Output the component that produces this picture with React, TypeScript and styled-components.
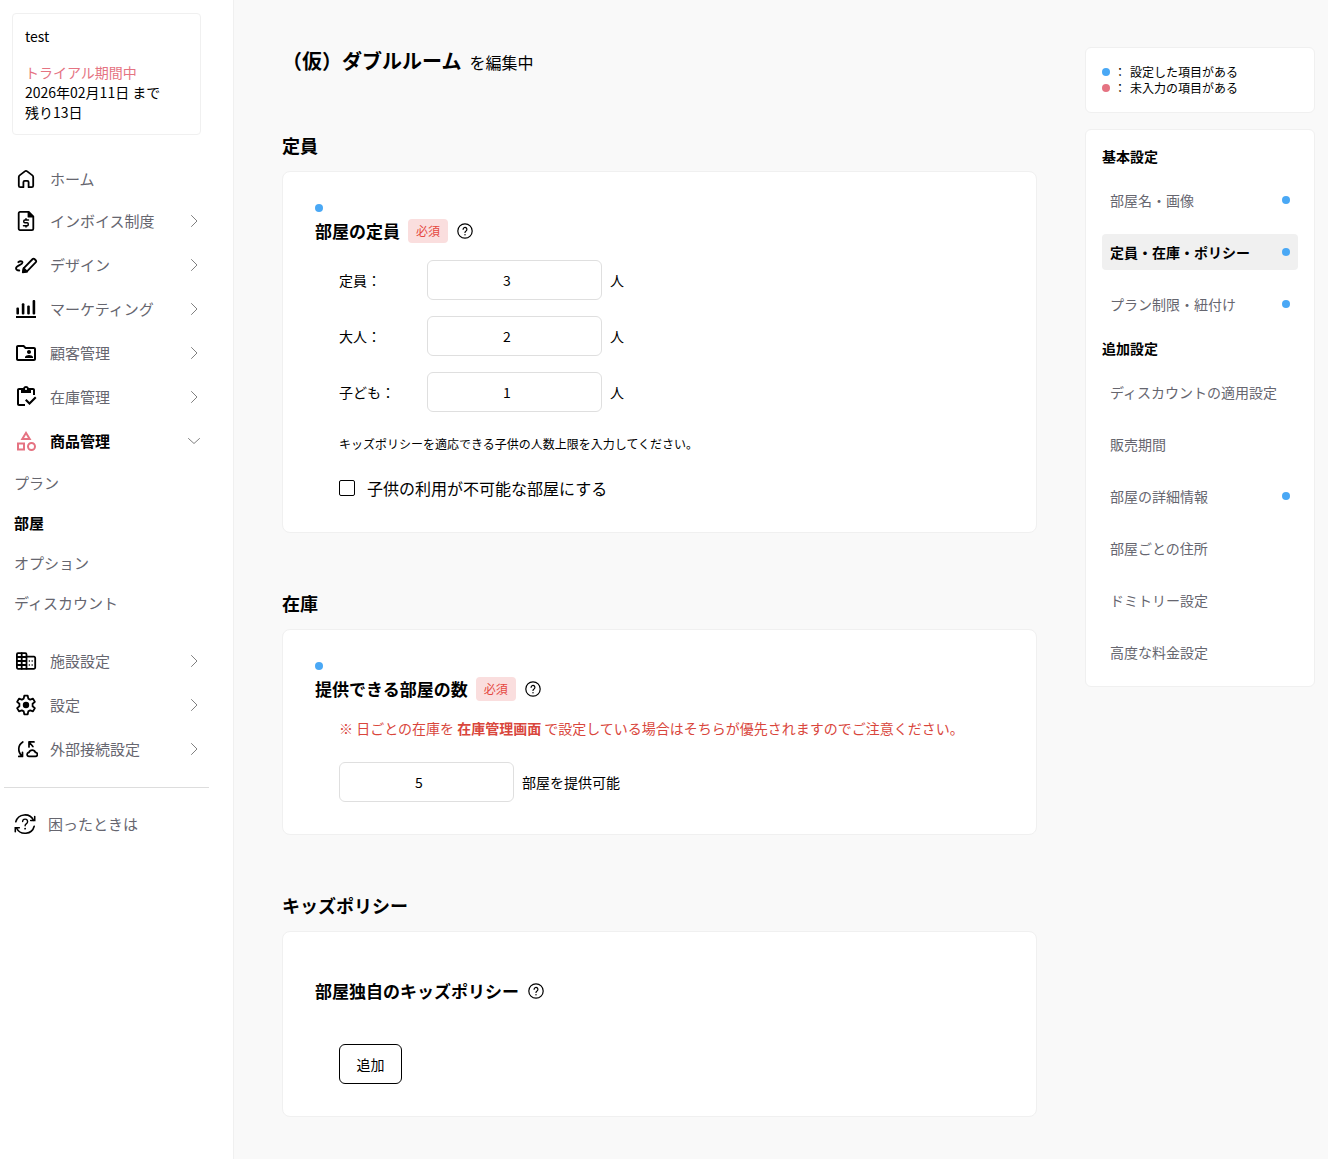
import React, { useState } from "react";
import styled, { createGlobalStyle, css } from "styled-components";
import {
  MdOutlineCategory,
  MdOutlineFolderShared,
  MdOutlineInventory,
} from "react-icons/md";

const color = {
  text: "#000000",
  muted: "#66666f",
  page: "#f9f9f9",
  surface: "#ffffff",
  line: "#f0f0f0",
  inputLine: "#dfdfdf",
  blue: "#4aa8f5",
  pink: "#e57382",
  danger: "#d9463c",
};

const GlobalStyle = createGlobalStyle`
  *, *::before, *::after { box-sizing: border-box; }
  body {
    margin: 0;
    background: ${color.page};
    color: ${color.text};
    font-family: "Noto Sans CJK JP", "Noto Sans", sans-serif;
    font-size: 14px;
    line-height: 20px;
  }
  a { color: inherit; text-decoration: none; }
  button, input { font: inherit; color: inherit; }
  h1, h2, h3, p, ul { margin: 0; padding: 0; }
  ul { list-style: none; }
`;

/* ---------- shell ---------- */

const Shell = styled.div`
  display: flex;
  min-height: 100vh;
`;

const Sidebar = styled.aside`
  flex: 0 0 234px;
  background: ${color.surface};
  border-right: 1px solid ${color.line};
  padding: 13px 24px 24px 4px;
`;

const Main = styled.main`
  flex: 1;
  min-width: 0;
  padding: 46px 48px 42px;
`;

const Side = styled.aside`
  flex: 0 0 230px;
  display: flex;
  flex-direction: column;
  gap: 16px;
  margin: 47px 13px 0 0;
`;

/* ---------- sidebar ---------- */

const Account = styled.section`
  margin: 0 8px 24px;
  padding: 12px;
  border: 1px solid ${color.line};
  border-radius: 4px;
`;

const AccountName = styled.p`
  margin-bottom: 16px;
`;

const Trial = styled.p`
  color: ${color.pink};
`;

const MenuLink = styled.a<{ $active?: boolean; $short?: boolean }>`
  display: flex;
  align-items: center;
  gap: 12px;
  height: ${(p) => (p.$short ? 40 : 44)}px;
  padding: 0 8px 0 10px;
  font-size: 15px;
  color: ${(p) => (p.$active ? color.text : color.muted)};
  font-weight: ${(p) => (p.$active ? 700 : 400)};
`;

const MenuIcon = styled.span<{ $accent?: boolean }>`
  display: flex;
  color: ${(p) => (p.$accent ? color.pink : color.text)};
  svg {
    width: 24px;
    height: 24px;
  }
`;

const MenuText = styled.span`
  flex: 1;
`;

const Chevron = styled.span`
  display: flex;
  color: #808080;
  svg {
    width: 14px;
    height: 14px;
  }
`;

const SubMenu = styled.ul`
  padding-bottom: 16px;
`;

const SubLink = styled.a<{ $active?: boolean }>`
  display: flex;
  align-items: center;
  height: 40px;
  padding-left: 10px;
  font-size: 15px;
  color: ${(p) => (p.$active ? color.text : color.muted)};
  font-weight: ${(p) => (p.$active ? 700 : 400)};
`;

const HelpArea = styled.div`
  margin-top: 16px;
  padding-top: 14px;
  border-top: 1px solid #dddddd;
`;

const HelpLink = styled(MenuLink)`
  gap: 11px;
  padding-left: 9px;
`;

/* ---------- shared pieces ---------- */

const cardBox = css`
  background: ${color.surface};
  border: 1px solid ${color.line};
`;

const Dot = styled.span<{ $tone?: "blue" | "pink" }>`
  flex: none;
  display: block;
  width: 8px;
  height: 8px;
  border-radius: 50%;
  background: ${(p) => (p.$tone === "pink" ? color.pink : color.blue)};
`;

/* ---------- main column ---------- */

const PageTitle = styled.h1`
  display: flex;
  align-items: baseline;
  gap: 8px;
  margin-bottom: 55px;
  font-size: 20px;
  line-height: 30px;
`;

const TitleNote = styled.span`
  font-size: 16px;
  font-weight: 400;
`;

const Section = styled.section`
  & + & {
    margin-top: 57px;
  }
`;

const SectionTitle = styled.h2`
  margin-bottom: 13px;
  font-size: 18px;
  line-height: 26px;
`;

const Card = styled.div`
  ${cardBox}
  border-radius: 8px;
  padding: 32px;
`;

const DotRow = styled.div`
  height: 15px;
`;

const FieldHead = styled.div`
  display: flex;
  align-items: center;
  gap: 8px;
  margin-bottom: 17px;
`;

const FieldTitle = styled.h3`
  font-size: 17px;
  line-height: 24px;
`;

const Required = styled.span`
  padding: 0 8px;
  border-radius: 4px;
  background: #fadede;
  color: #e5483f;
  font-size: 12px;
  line-height: 24px;
`;

const HintButton = styled.button`
  display: flex;
  align-items: center;
  justify-content: center;
  width: 18px;
  height: 18px;
  padding: 0;
  border: 0;
  background: none;
  cursor: pointer;
  svg {
    width: 16px;
    height: 16px;
  }
`;

const FieldBody = styled.div`
  display: flex;
  flex-direction: column;
  align-items: flex-start;
  gap: 24px;
  padding-left: 24px;
`;

const CountRows = styled.div`
  display: flex;
  flex-direction: column;
  gap: 16px;
`;

const CountRow = styled.div`
  display: flex;
  align-items: center;
  gap: 8px;
`;

const CountLabel = styled.label`
  width: 80px;
`;

const NumberInput = styled.input`
  width: 175px;
  height: 40px;
  padding: 0 8px;
  border: 1px solid ${color.inputLine};
  border-radius: 6px;
  background: ${color.surface};
  text-align: center;
`;

const SmallNote = styled.p`
  font-size: 12px;
  line-height: 16px;
`;

const CheckLabel = styled.label`
  display: flex;
  align-items: center;
  gap: 12px;
  font-size: 16px;
  line-height: 24px;
`;

const CheckBox = styled.input`
  appearance: none;
  width: 16px;
  height: 16px;
  margin: 0;
  border: 1px solid ${color.text};
  border-radius: 2px;
  background: ${color.surface};
  &:checked {
    background: ${color.text};
    box-shadow: inset 0 0 0 2px ${color.surface};
  }
`;

const Warning = styled.p`
  color: ${color.danger};
`;

const StrongLink = styled.a`
  font-weight: 700;
`;

const AddButton = styled.button`
  min-width: 63px;
  height: 40px;
  margin-top: 24px;
  padding: 0 16px;
  border: 1px solid ${color.text};
  border-radius: 6px;
  background: ${color.surface};
  cursor: pointer;
`;

/* ---------- right column ---------- */

const Legend = styled.ul`
  ${cardBox}
  border-radius: 6px;
  padding: 16px;
`;

const LegendRow = styled.li`
  display: flex;
  align-items: center;
  gap: 4px;
  font-size: 12px;
  line-height: 16px;
`;

const SettingNav = styled.nav`
  ${cardBox}
  border-radius: 6px;
  padding: 16px;
  display: flex;
  flex-direction: column;
  gap: 16px;
`;

const NavTitle = styled.h2`
  font-size: 14px;
  line-height: 20px;
`;

const NavLink = styled.a<{ $active?: boolean }>`
  display: flex;
  align-items: center;
  justify-content: space-between;
  height: 36px;
  padding: 0 8px;
  border-radius: 4px;
  color: ${(p) => (p.$active ? color.text : color.muted)};
  font-weight: ${(p) => (p.$active ? 700 : 400)};
  background: ${(p) => (p.$active ? "#f0f0f0" : "transparent")};
`;

/* ---------- icons ---------- */

const Line = ({
  children,
  width = 1.8,
  box = 24,
}: {
  children: React.ReactNode;
  width?: number;
  box?: number;
}) => (
  <svg
    viewBox={`0 0 ${box} ${box}`}
    fill="none"
    stroke="currentColor"
    strokeWidth={width}
    strokeLinecap="round"
    strokeLinejoin="round"
    aria-hidden="true"
  >
    {children}
  </svg>
);

const ChevronRight = () => (
  <Line box={14} width={1}>
    <path d="M4.500 1.500L10 7l-5.500 5.500" />
  </Line>
);

const ChevronDown = () => (
  <Line box={14} width={1}>
    <path d="M1.500 4.500L7 9.500l5.500-5" />
  </Line>
);

const HintIcon = () => (
  <Line box={16} width={1.2}>
    <circle cx="8" cy="8" r="7.200" />
    <path d="M6.100 6.300a1.900 1.900 0 1 1 2.900 1.600c-.7.4-1 .8-1 1.500" />
    <path d="M8 11.600v.1" strokeWidth="1.4" />
  </Line>
);

const HomeIcon = () => (
  <Line>
    <path d="M4.800 10v8.700a1.500 1.500 0 0 0 1.500 1.500h3.100v-5a1.300 1.300 0 0 1 1.300-1.300h2.600a1.300 1.300 0 0 1 1.300 1.300v5h3.100a1.500 1.500 0 0 0 1.500-1.500V10a2 2 0 0 0-.8-1.600l-5.200-4a2 2 0 0 0-2.400 0l-5.200 4A2 2 0 0 0 4.800 10z" />
  </Line>
);

const InvoiceIcon = () => (
  <Line>
    <path d="M14.500 2.900H6a1.300 1.300 0 0 0-1.300 1.300v15.600A1.300 1.300 0 0 0 6 21.100h12a1.300 1.300 0 0 0 1.300-1.300V7.700z" />
    <path d="M14.500 3v4.700h4.700z" fill="currentColor" />
    <path
      d="M14.500 11h-3.700a1 1 0 0 0-1 1v.8a1 1 0 0 0 1 1h2.400a1 1 0 0 1 1 1v.9a1 1 0 0 1-1 1H9.500M12 9.800V11M12 16.700v1.400"
      strokeWidth="1.500"
    />
  </Line>
);

const DesignIcon = () => (
  <Line>
    <path d="M4.300 9.200c1.200-1.100 4.200-1.500 4.200.3 0 2.300-6.500 3-6.500 5.800 0 1.500 1.500 2.200 3.300 2.200" />
    <path d="M9 19.200l.8-4L18.700 6a1.200 1.200 0 0 1 1.700 0l1.500 1.500a1.200 1.200 0 0 1 0 1.700L13 18.300z" />
    <path d="M8.800 19.400l.8-4.200 3.500 3.400z" fill="currentColor" />
  </Line>
);

const ChartIcon = () => (
  <svg viewBox="0 0 24 24" fill="currentColor" aria-hidden="true">
    <rect x="2.400" y="10.500" width="2.600" height="7" rx="1" />
    <rect x="7.800" y="6.200" width="2.600" height="11.300" rx="1" />
    <rect x="13.200" y="8.500" width="2.600" height="9" rx="1" />
    <rect x="18.600" y="3" width="2.600" height="14.500" rx="1" />
    <rect x="2" y="19" width="20" height="2" />
  </svg>
);

const BuildingIcon = () => (
  <Line>
    <path d="M12.500 7.700H20a1.200 1.200 0 0 1 1.200 1.200v9.700a1.200 1.200 0 0 1-1.200 1.200H4A1.200 1.200 0 0 1 2.900 18.600V5.400A1.200 1.200 0 0 1 4 4.200h7.300a1.200 1.200 0 0 1 1.200 1.200z" />
    <path d="M7.700 4.200v15.600M12.500 7.700v12M2.900 8h9.600M2.900 12h9.600M2.900 16h9.600" />
    <path d="M15.300 12h.1M15.300 16h.1M18.100 12h.1M18.100 16h.1" strokeWidth="1.500" />
  </Line>
);

const GearIcon = () => (
  <Line>
    <path d="M10.300 2.700h3.400l.6 2.900 1.900 1.100 2.800-1 1.900 3.200-2.300 1.900v2.400l2.300 1.900-1.900 3.200-2.800-1-1.900 1.100-.6 2.900h-3.400l-.6-2.900-1.900-1.100-2.800 1-1.900-3.200 2.300-1.900v-2.400L3.100 8.900 5 5.700l2.800 1 1.900-1.100z" />
    <circle cx="12" cy="12" r="2.300" fill="currentColor" />
  </Line>
);

const CloudSyncIcon = () => (
  <Line width={1.7}>
    <path d="M8.800 4.900C3.700 8 3.500 14.800 7.900 18.800M4.800 19.400h3.700v-4" />
    <path d="M20 4.900h-5v5M15.200 5.200l3.700 4.300" />
    <path d="M15.200 19.400a2 2 0 0 1-.2-4 3.400 3.400 0 0 1 6.400 0 2 2 0 0 1-.1 4z" />
  </Line>
);

const SupportIcon = () => (
  <Line width={1.6}>
    <path d="M2.800 9.800A9.500 9.500 0 0 1 20.500 8.300M21.200 14.200A9.500 9.500 0 0 1 3.500 16" />
    <path d="M21.700 4.500v4h-4M2.300 19.700v-3.900h4" strokeLinejoin="miter" />
    <path d="M9.600 9.500a2.500 2.500 0 1 1 3.900 2.200c-.9.600-1.400 1-1.400 2" strokeWidth="1.400" />
    <path d="M12.100 16.600v.1" strokeWidth="1.800" />
  </Line>
);

/* ---------- data ---------- */

type MenuEntry = {
  label: string;
  icon: React.ReactNode;
  plain?: boolean;
  active?: boolean;
  children?: { label: string; active?: boolean }[];
};

const menu: MenuEntry[] = [
  { label: "ホーム", icon: <HomeIcon />, plain: true },
  { label: "インボイス制度", icon: <InvoiceIcon /> },
  { label: "デザイン", icon: <DesignIcon /> },
  { label: "マーケティング", icon: <ChartIcon /> },
  { label: "顧客管理", icon: <MdOutlineFolderShared /> },
  { label: "在庫管理", icon: <MdOutlineInventory /> },
  {
    label: "商品管理",
    icon: <MdOutlineCategory />,
    active: true,
    children: [
      { label: "プラン" },
      { label: "部屋", active: true },
      { label: "オプション" },
      { label: "ディスカウント" },
    ],
  },
  { label: "施設設定", icon: <BuildingIcon /> },
  { label: "設定", icon: <GearIcon /> },
  { label: "外部接続設定", icon: <CloudSyncIcon /> },
];

const settingGroups: {
  title: string;
  items: { label: string; dot?: boolean; active?: boolean }[];
}[] = [
  {
    title: "基本設定",
    items: [
      { label: "部屋名・画像", dot: true },
      { label: "定員・在庫・ポリシー", dot: true, active: true },
      { label: "プラン制限・紐付け", dot: true },
    ],
  },
  {
    title: "追加設定",
    items: [
      { label: "ディスカウントの適用設定" },
      { label: "販売期間" },
      { label: "部屋の詳細情報", dot: true },
      { label: "部屋ごとの住所" },
      { label: "ドミトリー設定" },
      { label: "高度な料金設定" },
    ],
  },
];

const counts = [
  { id: "capacity", label: "定員：", value: 3 },
  { id: "adults", label: "大人：", value: 2 },
  { id: "children", label: "子ども：", value: 1 },
];

/* ---------- components ---------- */

function FieldHeading({
  title,
  filled,
  required,
  id,
}: {
  title: string;
  filled?: boolean;
  required?: boolean;
  id?: string;
}) {
  return (
    <>
      <DotRow>{filled && <Dot />}</DotRow>
      <FieldHead>
        <FieldTitle id={id}>{title}</FieldTitle>
        {required && <Required>必須</Required>}
        <HintButton type="button" aria-label="ヘルプ">
          <HintIcon />
        </HintButton>
      </FieldHead>
    </>
  );
}

function SideMenu() {
  return (
    <Sidebar>
      <Account>
        <AccountName>test</AccountName>
        <Trial>トライアル期間中</Trial>
        <p>2026年02月11日 まで</p>
        <p>残り13日</p>
      </Account>
      <nav>
        <ul>
          {menu.map((m) => (
            <li key={m.label}>
              <MenuLink href="#" $active={m.active} $short={m.plain}>
                <MenuIcon $accent={m.active}>{m.icon}</MenuIcon>
                <MenuText>{m.label}</MenuText>
                {!m.plain && (
                  <Chevron>{m.active ? <ChevronDown /> : <ChevronRight />}</Chevron>
                )}
              </MenuLink>
              {m.children && (
                <SubMenu>
                  {m.children.map((c) => (
                    <li key={c.label}>
                      <SubLink href="#" $active={c.active}>
                        {c.label}
                      </SubLink>
                    </li>
                  ))}
                </SubMenu>
              )}
            </li>
          ))}
        </ul>
      </nav>
      <HelpArea>
        <HelpLink href="#">
          <MenuIcon>
            <SupportIcon />
          </MenuIcon>
          <MenuText>困ったときは</MenuText>
        </HelpLink>
      </HelpArea>
    </Sidebar>
  );
}

export default function App() {
  const [noKids, setNoKids] = useState(false);

  return (
    <>
      <GlobalStyle />
      <Shell>
        <SideMenu />
        <Main>
          <PageTitle>
            （仮）ダブルルーム
            <TitleNote>を編集中</TitleNote>
          </PageTitle>

          <Section>
            <SectionTitle>定員</SectionTitle>
            <Card>
              <FieldHeading title="部屋の定員" filled required />
              <FieldBody>
                <CountRows>
                  {counts.map((c) => (
                    <CountRow key={c.id}>
                      <CountLabel htmlFor={c.id}>{c.label}</CountLabel>
                      <NumberInput id={c.id} type="number" defaultValue={c.value} />
                      <span>人</span>
                    </CountRow>
                  ))}
                </CountRows>
                <SmallNote>
                  キッズポリシーを適応できる子供の人数上限を入力してください。
                </SmallNote>
                <CheckLabel>
                  <CheckBox
                    type="checkbox"
                    checked={noKids}
                    onChange={(e) => setNoKids(e.target.checked)}
                  />
                  子供の利用が不可能な部屋にする
                </CheckLabel>
              </FieldBody>
            </Card>
          </Section>

          <Section>
            <SectionTitle>在庫</SectionTitle>
            <Card>
              <FieldHeading id="stock-title" title="提供できる部屋の数" filled required />
              <FieldBody>
                <Warning>
                  ※ 日ごとの在庫を <StrongLink href="#">在庫管理画面</StrongLink>{" "}
                  で設定している場合はそちらが優先されますのでご注意ください。
                </Warning>
                <CountRow>
                  <NumberInput
                    id="stock"
                    type="number"
                    defaultValue={5}
                    aria-labelledby="stock-title"
                  />
                  <label htmlFor="stock">部屋を提供可能</label>
                </CountRow>
              </FieldBody>
            </Card>
          </Section>

          <Section>
            <SectionTitle>キッズポリシー</SectionTitle>
            <Card>
              <FieldHeading title="部屋独自のキッズポリシー" />
              <FieldBody>
                <AddButton type="button">追加</AddButton>
              </FieldBody>
            </Card>
          </Section>
        </Main>

        <Side>
          <Legend>
            <LegendRow>
              <Dot />
              <span>：</span>
              <span>設定した項目がある</span>
            </LegendRow>
            <LegendRow>
              <Dot $tone="pink" />
              <span>：</span>
              <span>未入力の項目がある</span>
            </LegendRow>
          </Legend>
          <SettingNav>
            {settingGroups.map((g) => (
              <React.Fragment key={g.title}>
                <NavTitle>{g.title}</NavTitle>
                {g.items.map((i) => (
                  <NavLink key={i.label} href="#" $active={i.active}>
                    {i.label}
                    {i.dot && <Dot />}
                  </NavLink>
                ))}
              </React.Fragment>
            ))}
          </SettingNav>
        </Side>
      </Shell>
    </>
  );
}
